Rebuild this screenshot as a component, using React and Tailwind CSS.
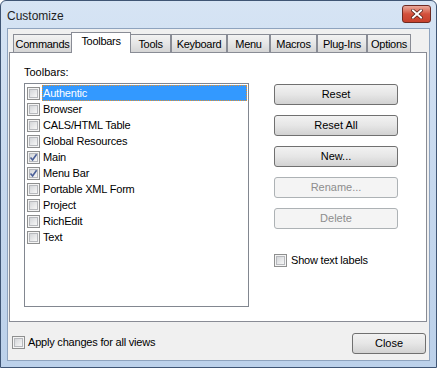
import { useState } from 'react'

const tabs = [
  { label: 'Commands', w: 'w-[59px]' },
  { label: 'Toolbars', w: 'w-[60px]' },
  { label: 'Tools', w: 'w-[41px]' },
  { label: 'Keyboard', w: 'w-[56px]' },
  { label: 'Menu', w: 'w-[43px]' },
  { label: 'Macros', w: 'w-[47px]' },
  { label: 'Plug-Ins', w: 'w-[50px]' },
  { label: 'Options', w: 'w-[44px]' },
]

const initialToolbars = [
  { name: 'Authentic', checked: false },
  { name: 'Browser', checked: false },
  { name: 'CALS/HTML Table', checked: false },
  { name: 'Global Resources', checked: false },
  { name: 'Main', checked: true },
  { name: 'Menu Bar', checked: true },
  { name: 'Portable XML Form', checked: false },
  { name: 'Project', checked: false },
  { name: 'RichEdit', checked: false },
  { name: 'Text', checked: false },
]

function Checkbox({ checked, onChange }) {
  return (
    <button
      type="button"
      onClick={onChange}
      className="w-[13px] h-[13px] shrink-0 border border-[#8e8f8f] bg-[#f4f4f4] p-[1px] flex"
    >
      <span className="relative flex-1 border border-[#b7b9bd] bg-gradient-to-br from-[#d4d6d9] to-[#f7f7f7]">
        {checked && (
          <svg viewBox="0 0 9 9" className="absolute -left-[1px] -top-[1px] w-[9px] h-[9px]">
            <path d="M1.5 4.5 L3.6 7 L7.6 1.2" fill="none" stroke="#4a5f98" strokeWidth="1.6" />
          </svg>
        )}
      </span>
    </button>
  )
}

function Button({ children, disabled, className = '' }) {
  return (
    <button
      type="button"
      disabled={disabled}
      className={
        'h-[21px] rounded-[3px] border text-[11px] leading-none ' +
        (disabled
          ? 'border-[#adb2b5] bg-[#f4f4f4] text-[#8d8d8d] '
          : 'border-[#707070] bg-gradient-to-b from-[#f2f2f2] via-[#e6e6e6] to-[#d2d2d2] text-black ') +
        className
      }
    >
      {children}
    </button>
  )
}

export default function App() {
  const [active, setActive] = useState('Toolbars')
  const [toolbars, setToolbars] = useState(initialToolbars)
  const [selected, setSelected] = useState('Authentic')
  const [showLabels, setShowLabels] = useState(false)
  const [applyAll, setApplyAll] = useState(false)

  const toggle = (name) =>
    setToolbars((list) => list.map((t) => (t.name === name ? { ...t, checked: !t.checked } : t)))

  return (
    <div
      className="w-[437px] h-[368px] flex flex-col border border-[#3f5574] rounded-t-[6px] bg-gradient-to-b from-[#d6e4f4] via-[#c6d8ee] to-[#bcd1ea] text-black"
      style={{ fontFamily: '"Liberation Sans", Arial, sans-serif' }}
    >
      {/* Title bar */}
      <div className="h-[27px] shrink-0 flex items-start justify-between pl-[6px] pr-[5px]">
        <span className="mt-[6px] text-[12px] text-[#1e1e1e]">Customize</span>
        <button
          type="button"
          className="mt-[4px] w-[29px] h-[18px] rounded-[3px] border border-[#6e2a22] bg-gradient-to-b from-[#e9a99b] via-[#d2503c] to-[#c6402c] flex items-center justify-center"
        >
          <svg viewBox="0 0 12 10" className="w-[12px] h-[10px]">
            <path d="M2 1.5 L10 8.5 M10 1.5 L2 8.5" stroke="#4d1a14" strokeWidth="3.4" strokeLinecap="square" />
            <path d="M2 1.5 L10 8.5 M10 1.5 L2 8.5" stroke="#ffffff" strokeWidth="2" strokeLinecap="square" />
          </svg>
        </button>
      </div>

      {/* Client area */}
      <div className="flex-1 mx-[6px] mb-[6px] border border-[#8ea3be] bg-[#f0f0f0] flex flex-col">
        <div className="pt-[3px] pl-[1px] pr-[2px]">
          {/* Tab strip */}
          <div className="h-[20px] flex items-end pl-[4px] relative z-10">
            {tabs.map((t) => {
              const isActive = t.label === active
              return (
                <button
                  key={t.label}
                  type="button"
                  onClick={() => setActive(t.label)}
                  className={
                    t.w +
                    ' shrink-0 text-[11px] tracking-[-0.3px] border border-[#898c95] ' +
                    (isActive
                      ? 'h-[21px] -mb-[1px] -mx-[1px] border-b-0 bg-white pb-[3px]'
                      : 'h-[18px] border-b-0 bg-gradient-to-b from-[#f3f3f3] via-[#e6e6e6] to-[#d5d5d5] pt-[1px]')
                  }
                >
                  {t.label}
                </button>
              )
            })}
          </div>

          {/* Tab panel */}
          <div className="h-[270px] border border-[#898c95] bg-white pl-[14px] pt-[12px] flex gap-[25px]">
            <div className="flex flex-col">
              <span className="text-[11px] leading-[14px] mb-[4px]">Toolbars:</span>
              <div className="w-[225px] h-[224px] border border-[#828790] bg-white pt-[1px] pl-[2px] pr-[1px]">
                {toolbars.map((t) => {
                  const isSel = t.name === selected
                  return (
                    <div key={t.name} className="h-[16px] flex items-center gap-[2px]">
                      <Checkbox checked={t.checked} onChange={() => toggle(t.name)} />
                      <span
                        onClick={() => setSelected(t.name)}
                        className={
                          'flex-1 h-[16px] text-[11px] leading-[14px] tracking-[-0.2px] border ' +
                          (isSel
                            ? 'bg-[#3399ff] text-white border-dotted border-[#e8912c]'
                            : 'border-transparent')
                        }
                      >
                        {t.name}
                      </span>
                    </div>
                  )
                })}
              </div>
            </div>

            <div className="flex flex-col w-[124px] mt-[19px]">
              <div className="flex flex-col gap-[10px]">
                <Button>Reset</Button>
                <Button>Reset All</Button>
                <Button>New...</Button>
                <Button disabled>Rename...</Button>
                <Button disabled>Delete</Button>
              </div>
              <label className="mt-[23px] flex items-center gap-[4px] text-[11px] tracking-[-0.2px]">
                <Checkbox checked={showLabels} onChange={() => setShowLabels(!showLabels)} />
                Show text labels
              </label>
            </div>
          </div>
        </div>

        {/* Bottom row */}
        <div className="flex items-start justify-between pl-[4px] pr-[3px] mt-[11px]">
          <label className="mt-[1px] flex items-center gap-[3px] text-[11px] tracking-[-0.2px]">
            <Checkbox checked={applyAll} onChange={() => setApplyAll(!applyAll)} />
            Apply changes for all views
          </label>
          <Button className="w-[74px]">Close</Button>
        </div>
      </div>
    </div>
  )
}
